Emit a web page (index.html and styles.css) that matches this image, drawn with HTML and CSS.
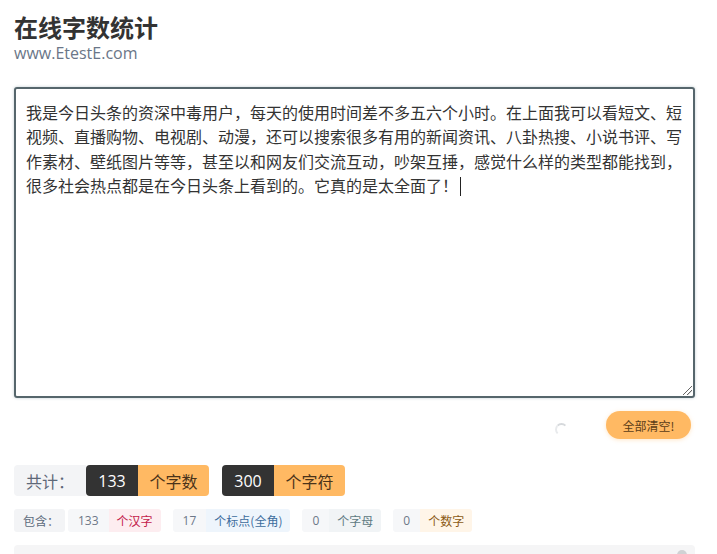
FILE: index.html
```html
<!DOCTYPE html>
<html lang="zh-CN">
<head>
<meta charset="utf-8">
<title>在线字数统计</title>
<link rel="stylesheet" href="styles.css">
</head>
<body>
<div class="page">
  <header class="head">
    <h1 class="title">在线字数统计</h1>
    <div class="site">www.EtestE.com</div>
  </header>
  <div class="editor">我是今日头条的资深中毒用户，每天的使用时间差不多五六个小时。在上面我可以看短文、短视频、直播购物、电视剧、动漫，还可以搜索很多有用的新闻资讯、八卦热搜、小说书评、写作素材、壁纸图片等等，甚至以和网友们交流互动，吵架互捶，感觉什么样的类型都能找到，很多社会热点都是在今日头条上看到的。它真的是太全面了！<span class="caret"></span><span class="grip"></span></div>
  <div class="actions">
    <span class="spinner"></span>
    <button class="clear">全部清空!</button>
  </div>
  <div class="totals">
    <span class="tlabel">共计：</span>
    <span class="pair"><span class="num">133</span><span class="unit">个字数</span></span>
    <span class="pair"><span class="num">300</span><span class="unit">个字符</span></span>
  </div>
  <div class="details">
    <span class="dlabel">包含：</span>
    <span class="dpair"><span class="dnum">133</span><span class="dunit red">个汉字</span></span>
    <span class="dpair"><span class="dnum">17</span><span class="dunit blue">个标点(全角)</span></span>
    <span class="dpair"><span class="dnum">0</span><span class="dunit teal">个字母</span></span>
    <span class="dpair"><span class="dnum">0</span><span class="dunit amber">个数字</span></span>
  </div>
  <div class="bottom"><span class="knob"></span></div>
</div>
</body>
</html>
```
FILE: styles.css
```css
* { box-sizing: border-box; }
html, body { margin: 0; padding: 0; background: #fff; }
body {
  font-family: "Microsoft YaHei", "Noto Sans CJK SC", "Noto Sans", sans-serif;
  color: #333;
  overflow: hidden;
}
.page {
  width: 681px;
  margin-left: 14px;
  padding-top: 9px;
}
.head { margin-bottom: 23px; }
.title {
  margin: 0;
  font-size: 24px;
  line-height: 35px;
  font-weight: 700;
  color: #333;
}
.site {
  font-family: "Open Sans", "Noto Sans", sans-serif;
  font-size: 16px;
  line-height: 22px;
  margin-top: -2px;
  color: #6a7688;
}
.editor {
  position: relative;
  height: 311px;
  border: 2px solid #56666c;
  border-radius: 3px;
  box-shadow: 0 0 3px rgba(110, 140, 150, 0.45);
  padding: 11px 10px;
  font-size: 16px;
  line-height: 24.3px;
  color: #333;
}
.caret {
  display: inline-block;
  width: 1px;
  height: 19px;
  background: #222;
  vertical-align: -4px;
  margin-left: 2px;
}
.grip {
  position: absolute;
  right: 1px;
  bottom: 1px;
  width: 9px;
  height: 9px;
  background: linear-gradient(135deg, transparent 45%, #666 46%, #666 52%, transparent 53%, transparent 70%, #666 71%, #666 77%, transparent 78%);
}
.actions {
  display: flex;
  align-items: center;
  justify-content: flex-end;
  gap: 38px;
  height: 28px;
  margin-top: 13px;
  padding-right: 4px;
}
.spinner {
  width: 13px;
  height: 13px;
  border-radius: 50%;
  border: 2px solid transparent;
  border-top-color: #d6d9dc;
  border-left-color: #e8eaec;
  margin-top: 8px;
}
.clear {
  width: 85px;
  height: 28px;
  border: none;
  border-radius: 14px;
  background: #ffb963;
  color: #5b3d18;
  font-family: inherit;
  font-size: 12px;
  box-shadow: 0 1px 4px rgba(255, 185, 99, 0.35);
  padding: 0;
}
.totals {
  display: flex;
  align-items: center;
  gap: 13px;
  margin-top: 26px;
  height: 31px;
}
.tlabel {
  display: flex;
  align-items: center;
  height: 31px;
  width: 72px;
  padding-left: 12px;
  background: #f3f4f6;
  color: #5e6878;
  font-size: 16px;
  border-radius: 4px 0 0 4px;
  margin-right: -13px;
}
.pair { display: flex; height: 31px; border-radius: 4px; overflow: hidden; font-size: 16px; }
.num {
  display: flex;
  align-items: center;
  justify-content: center;
  background: #333;
  color: #fff;
  min-width: 52px;
  padding: 0 10px;
  font-family: "Open Sans", "Noto Sans", sans-serif;
}
.unit {
  display: flex;
  align-items: center;
  justify-content: center;
  background: #ffb963;
  color: #4a331a;
  width: 71px;
}
.details {
  display: flex;
  align-items: center;
  gap: 12px;
  margin-top: 13px;
  height: 23px;
  font-size: 12px;
}
.dlabel {
  display: flex;
  align-items: center;
  height: 23px;
  width: 51px;
  padding-left: 9px;
  background: #f3f4f6;
  color: #5c6b7c;
  border-radius: 3px;
  margin-right: -9px;
}
.dpair { display: flex; height: 23px; border-radius: 3px; overflow: hidden; }
.dnum {
  display: flex;
  align-items: center;
  justify-content: center;
  background: #f6f7f9;
  color: #6d7888;
  padding: 0 10px;
  min-width: 20px;
  font-family: "Open Sans", "Noto Sans", sans-serif;
}
.dunit {
  display: flex;
  align-items: center;
  justify-content: center;
  padding: 0 8px;
}
.red { background: #fdedf0; color: #c3204a; }
.blue { background: #eef5fc; color: #3d6d9c; }
.teal { background: #f1f4f6; color: #5e7a82; }
.amber { background: #fff5e8; color: #8c5a14; }
.bottom {
  position: relative;
  margin-top: 13px;
  height: 30px;
  background: #f5f5f6;
  border-radius: 4px;
}
.knob {
  position: absolute;
  right: 8px;
  top: 5px;
  width: 10px;
  height: 10px;
  border-radius: 50%;
  background: #d0d2d4;
}
```
